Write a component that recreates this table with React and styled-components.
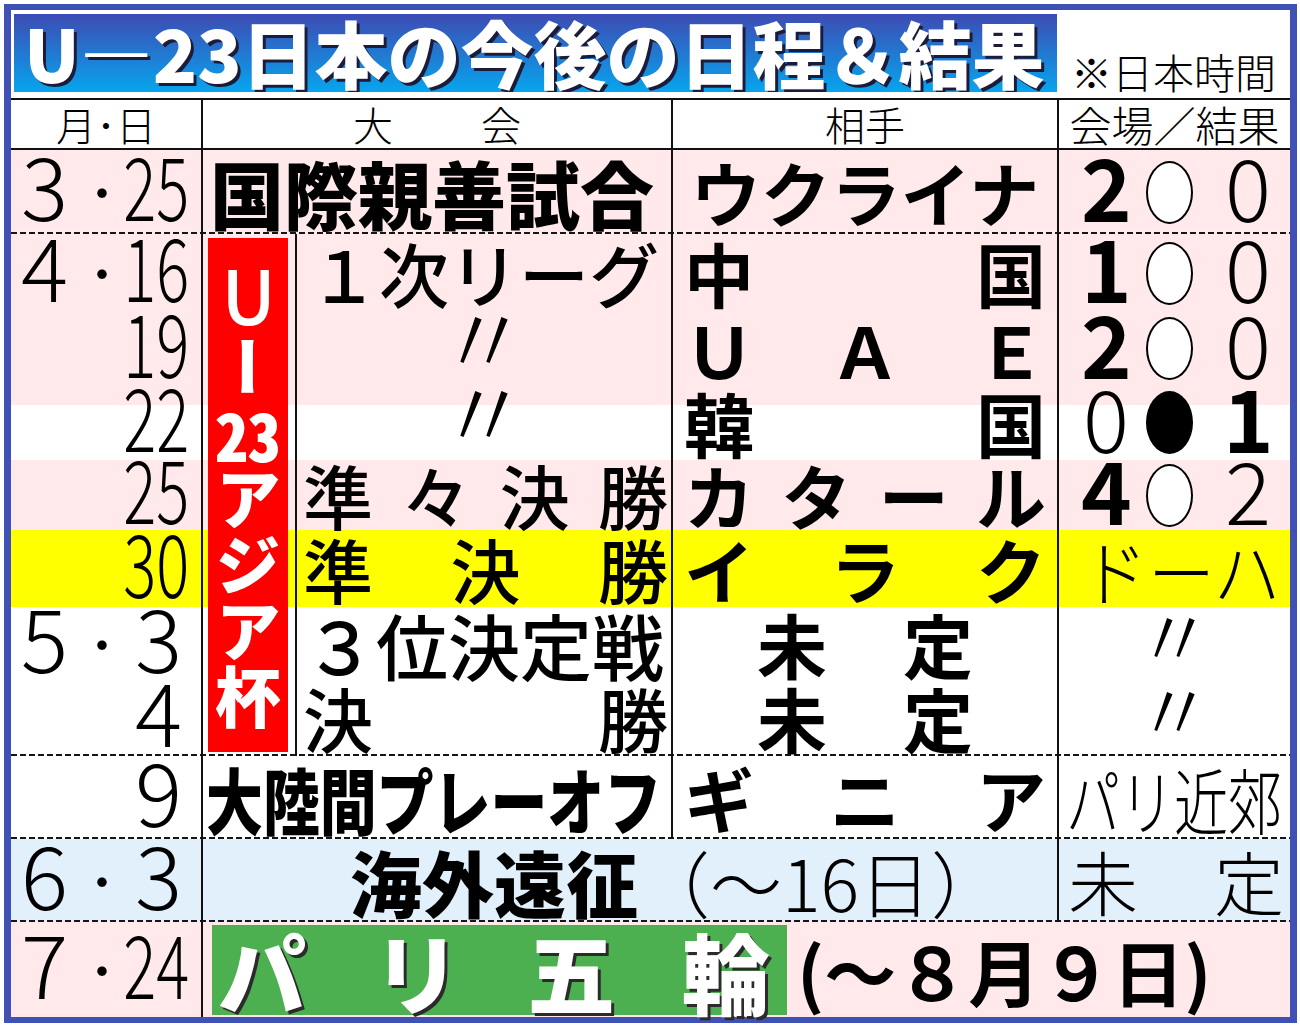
import React from "react";
import styled, { createGlobalStyle } from "styled-components";

const frameBlue = "#4051b5";
const pink = "#ffe9eb";
const yellow = "#ffff00";
const skyBlue = "#e1f0fb";
const line = "#111";

const GlobalStyle = createGlobalStyle`
  html, body {
    margin: 0;
    padding: 0;
    background: #fff;
  }
  body {
    font-family: "Noto Sans CJK JP", "Noto Sans", sans-serif;
  }
`;

const Frame = styled.div`
  box-sizing: border-box;
  width: 1293px;
  height: 1019px;
  margin: 4px 0 0 4px;
  border: 7px solid ${frameBlue};
  border-top-width: 6px;
  border-bottom-width: 6px;
  background: #fff;
  display: flex;
  flex-direction: column;
  font-family: "Noto Sans CJK JP", "Noto Sans", sans-serif;
  color: #000;
`;

const TitleArea = styled.div`
  box-sizing: border-box;
  display: flex;
  height: 88px;
  padding: 4px 0 6px 3px;
`;

const TitleBar = styled.div`
  box-sizing: border-box;
  width: 1043px;
  height: 78px;
  background: linear-gradient(#3d4bb3, #07a5ee);
  display: flex;
  align-items: center;
  padding-left: 10px;
  overflow: hidden;
`;

const TitleText = styled.h1`
  margin: 0 0 4px;
  font-size: 73px;
  font-weight: 900;
  line-height: 1;
  color: #fff;
  white-space: nowrap;
  text-shadow: 3px 3px 0 #1c1c3a;
`;

const Note = styled.div`
  flex: 1;
  display: flex;
  align-items: flex-end;
  justify-content: center;
  font-size: 41px;
  font-weight: 300;
  line-height: 1;
`;

const Header = styled.div`
  box-sizing: border-box;
  display: grid;
  grid-template-columns: 190px 470px 386px 1fr;
  grid-template-rows: minmax(0, 1fr);
  height: 52px;
  border-top: 2px solid ${line};
  border-bottom: 2px solid ${line};
`;

const HeadCell = styled.div`
  display: flex;
  align-items: center;
  justify-content: center;
  gap: ${(p) => p.$gap || 0}px;
  border-left: ${(p) => (p.$first ? "none" : `2px solid ${line}`)};
  font-size: ${(p) => p.$size || 40}px;
  font-weight: 300;
  line-height: 1;
`;

const dash = `repeating-linear-gradient(90deg, #151515 0 6px, transparent 6px 9px) left bottom / 100% 2px no-repeat`;

const Row = styled.div`
  box-sizing: border-box;
  display: grid;
  grid-template-columns: ${(p) => p.$cols};
  grid-template-rows: minmax(0, 1fr);
  height: ${(p) => p.$h}px;
  background: ${(p) => (p.$dash ? `${dash}, ${p.$bg}` : p.$bg)};
`;

const DateCell = styled.div`
  display: flex;
  align-items: center;
  padding: 0 12px 0 10px;
  font-weight: 300;
  line-height: 1;
  min-width: 0;
`;

const Month = styled.span`
  flex: 0 0 56px;
  font-size: 88px;
  margin-bottom: 18px;
`;

const Dot = styled.span`
  flex: 0 0 50px;
  font-size: 50px;
  text-align: center;
  margin-bottom: 4px;
`;

const Day = styled.span`
  flex: 1;
  display: flex;
  justify-content: flex-end;
  min-width: 0;
  font-size: 88px;
  margin-bottom: 18px;
  padding-right: ${(p) => (p.$narrow ? 0 : 7)}px;
`;

const DayText = styled.span`
  display: inline-block;
  flex-shrink: 0;
  transform: ${(p) => (p.$narrow ? "scaleX(0.7)" : "none")};
  transform-origin: right center;
`;

const Cell = styled.div`
  box-sizing: border-box;
  border-left: 2px solid ${line};
  display: flex;
  align-items: center;
  justify-content: ${(p) => p.$justify || "center"};
  gap: ${(p) => p.$gap || 0}px;
  padding: ${(p) => p.$pad || "0"};
  font-size: ${(p) => p.$size || 70}px;
  font-weight: ${(p) => p.$weight || 700};
  line-height: 1;
  white-space: nowrap;
  min-width: 0;
`;

const Squeeze = styled.span`
  display: inline-block;
  flex-shrink: 0;
  transform: scaleX(${(p) => p.$x});
  transform-origin: left center;
`;

const Light = styled.span`
  font-weight: 300;
`;

const Ditto = styled.span`
  font-size: ${(p) => p.$size}px;
  font-weight: 300;
  margin-bottom: ${(p) => p.$lift * 2}px;
`;

const Score = styled.div`
  display: flex;
  align-items: center;
  padding-left: 22px;
`;

const Pt = styled.span`
  flex-shrink: 0;
  width: 50px;
  text-align: center;
  font-size: 86px;
  font-weight: ${(p) => (p.$win ? 700 : 300)};
  margin-bottom: 14px;
`;

const Mark = styled.span`
  box-sizing: border-box;
  flex-shrink: 0;
  width: 47px;
  height: 63px;
  margin: 0 30px 0 15px;
  border: 2px solid #000;
  border-radius: 50%;
  background: ${(p) => (p.$lose ? "#000" : "#fff")};
`;

const Group = styled.div`
  position: relative;
`;

const Badge = styled.div`
  position: absolute;
  left: 197px;
  top: 4px;
  width: 80px;
  height: 514px;
  background: #ff0000;
  color: #fff;
  display: flex;
  align-items: center;
  justify-content: center;
`;

const BadgeText = styled.span`
  writing-mode: vertical-rl;
  text-orientation: upright;
  font-size: 66px;
  font-weight: 900;
  line-height: 1;
`;

const BadgeLatin = styled.span`
  font-size: 74px;
  font-weight: 500;
`;

const Tcy = styled.span`
  text-combine-upright: all;
`;

const Finale = styled.div`
  border-left: 2px solid ${line};
  display: flex;
  align-items: center;
  padding-left: 9px;
`;

const GreenBox = styled.div`
  box-sizing: border-box;
  width: 575px;
  height: 90px;
  background: #4caf50;
  display: flex;
  align-items: center;
  justify-content: space-between;
  padding: 0 17px 0 6px;
  font-size: 88px;
  font-weight: 900;
  line-height: 1;
  color: #fff;
  text-shadow: 3px 3px 0 #2b2b2b;
`;

const Period = styled.span`
  margin-left: 10px;
  font-size: 72px;
  font-weight: 700;
  line-height: 1;
  white-space: nowrap;
`;

const wide = "190px 470px 386px 1fr";
const groupCols = "190px 94px 376px 386px 1fr";

function DateOf({ month, day }) {
  const narrow = day.length > 1;
  return (
    <DateCell>
      {month && <Month>{month}</Month>}
      {month && <Dot>・</Dot>}
      <Day $narrow={narrow}>
        <DayText $narrow={narrow}>{day}</DayText>
      </Day>
    </DateCell>
  );
}

function Spread({ chars, pad, size, weight }) {
  return (
    <Cell $justify="space-between" $pad={pad} $size={size} $weight={weight}>
      {chars.map((c, i) => (
        <span key={i}>{c}</span>
      ))}
    </Cell>
  );
}

function Result({ a, b, win }) {
  return (
    <Cell $justify="flex-start">
      <Score>
        <Pt $win={win}>{a}</Pt>
        <Mark $lose={!win} />
        <Pt $win={!win}>{b}</Pt>
      </Score>
    </Cell>
  );
}

const eventPad = "0 3px 0 6px";
const oppPad = "0 11px";

const EventDitto = () => (
  <Cell>
    <Ditto $size={94} $lift={14}>〃</Ditto>
  </Cell>
);

const PlaceDitto = () => (
  <Cell>
    <Ditto $size={80} $lift={12}>〃</Ditto>
  </Cell>
);

const groupRows = [
  {
    h: 78, bg: pink, month: "4", day: "16",
    event: <Cell $weight={500}>１次リーグ</Cell>,
    opp: ["中", "国"], res: { a: "1", b: "0", win: true },
  },
  {
    h: 73, bg: pink, day: "19",
    event: <EventDitto />,
    opp: ["Ｕ", "Ａ", "Ｅ"], res: { a: "2", b: "0", win: true },
  },
  {
    h: 75, bg: `linear-gradient(${pink} 0 20px, #fff 20px)`, day: "22",
    event: <EventDitto />,
    opp: ["韓", "国"], res: { a: "0", b: "1", win: false },
  },
  {
    h: 70, bg: pink, day: "25",
    event: <Spread chars={["準", "々", "決", "勝"]} pad={eventPad} weight={500} />,
    opp: ["カ", "タ", "ー", "ル"], res: { a: "4", b: "2", win: true },
  },
  {
    h: 77, bg: yellow, day: "30",
    event: <Spread chars={["準", "決", "勝"]} pad={eventPad} weight={500} />,
    opp: ["イ", "ラ", "ク"],
    place: (
      <Cell $justify="flex-start" $weight={300} $size={72} $pad="0 0 0 22px">
        <Squeeze $x={0.93}>ドーハ</Squeeze>
      </Cell>
    ),
  },
  {
    h: 73, bg: "#fff", month: "5", day: "3",
    event: <Cell $weight={500} $size={72}>３位決定戦</Cell>,
    tbd: true,
    place: <PlaceDitto />,
  },
  {
    h: 76, bg: "#fff", day: "4", dash: true,
    event: <Spread chars={["決", "勝"]} pad={eventPad} weight={500} />,
    tbd: true,
    place: <PlaceDitto />,
  },
];

export default function App() {
  return (
    <>
      <GlobalStyle />
      <Frame>
        <TitleArea>
          <TitleBar>
            <TitleText>U―23日本の今後の日程＆結果</TitleText>
          </TitleBar>
          <Note>※日本時間</Note>
        </TitleArea>

        <Header>
          <HeadCell $first>月･日</HeadCell>
          <HeadCell $gap={88}>
            <span>大</span>
            <span>会</span>
          </HeadCell>
          <HeadCell>相手</HeadCell>
          <HeadCell $size={42}>会場／結果</HeadCell>
        </Header>

        <Row $cols={wide} $h={84} $bg={pink} $dash>
          <DateOf month="3" day="25" />
          <Cell $justify="flex-start" $pad="0 0 0 7px" $size={74} $weight={900}>
            国際親善試合
          </Cell>
          <Cell $size={70}>ウクライナ</Cell>
          <Result a="2" b="0" win />
        </Row>

        <Group>
          {groupRows.map((r, i) => (
            <Row key={i} $cols={groupCols} $h={r.h} $bg={r.bg} $dash={r.dash}>
              <DateOf month={r.month} day={r.day} />
              <Cell />
              {r.event}
              {r.tbd ? (
                <Cell $gap={76}>
                  <span>未</span>
                  <span>定</span>
                </Cell>
              ) : (
                <Spread chars={r.opp} pad={oppPad} />
              )}
              {r.res ? <Result {...r.res} /> : r.place}
            </Row>
          ))}
          <Badge>
            <BadgeText>
              <BadgeLatin>U</BadgeLatin>ー<Tcy>23</Tcy>アジア杯
            </BadgeText>
          </Badge>
        </Group>

        <Row $cols={wide} $h={83} $bg="#fff" $dash>
          <DateOf day="9" />
          <Cell $justify="flex-start" $pad="0 0 0 3px" $size={72} $weight={900}>
            <Squeeze $x={0.79}>大陸間プレーオフ</Squeeze>
          </Cell>
          <Spread chars={["ギ", "ニ", "ア"]} pad={oppPad} />
          <Cell $justify="flex-start" $pad="0 0 0 7px" $size={72} $weight={300}>
            <Squeeze $x={0.75}>パリ近郊</Squeeze>
          </Cell>
        </Row>

        <Row $cols="190px 856px 1fr" $h={83} $bg={skyBlue} $dash>
          <DateOf month="6" day="3" />
          <Cell $justify="flex-start" $pad="0 0 0 147px" $size={72} $weight={900}>
            海外遠征<Light>（〜16日）</Light>
          </Cell>
          <Spread chars={["未", "定"]} pad="0 6px 0 9px" weight={300} />
        </Row>

        <Row $cols="190px 1fr" $h={95} $bg={pink}>
          <DateOf month="7" day="24" />
          <Finale>
            <GreenBox>
              <span>パ</span>
              <span>リ</span>
              <span>五</span>
              <span>輪</span>
            </GreenBox>
            <Period>(〜８月９日)</Period>
          </Finale>
        </Row>
      </Frame>
    </>
  );
}
